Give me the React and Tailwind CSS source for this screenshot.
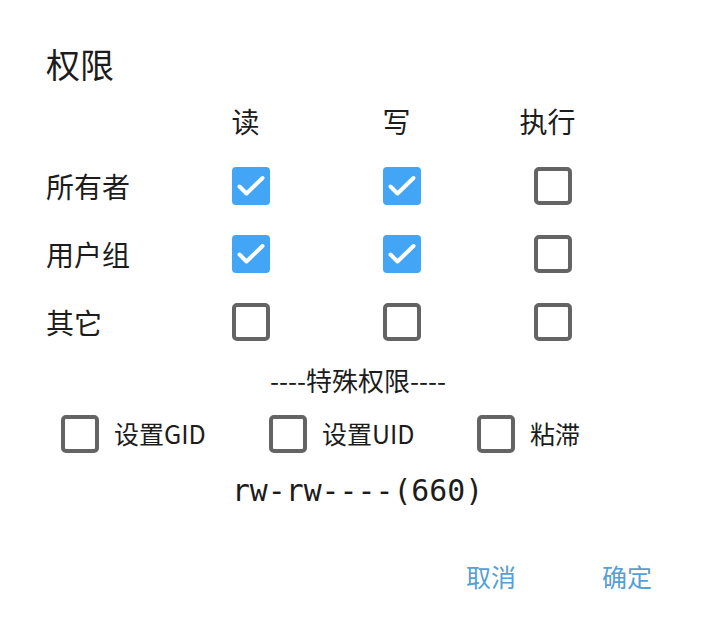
const cjk = { fontFamily: '"Noto Sans CJK SC", "Noto Sans", sans-serif' };

const rows = [
  { label: '所有者', values: [true, true, false] },
  { label: '用户组', values: [true, true, false] },
  { label: '其它', values: [false, false, false] },
];

function Box({ checked }) {
  if (checked) {
    return (
      <span className="w-[38px] h-[38px] rounded-[4px] bg-[#42a5f5] flex items-center justify-center">
        <svg width="38" height="38" viewBox="0 0 38 38" fill="none" stroke="white" strokeWidth="4" strokeLinecap="round" strokeLinejoin="round">
          <path d="M7.5 19.5l7 7L30.5 11" />
        </svg>
      </span>
    );
  }
  return <span className="w-[38px] h-[38px] rounded-[5px] border-[4px] border-[#646464] bg-white" />;
}

export default function App() {
  return (
    <div className="w-[720px] h-[636px] bg-white text-[#1c1c1c] flex flex-col" style={cjk}>
      <div className="mt-[44px] pl-[46px] h-[40px] leading-[40px] text-[34px]">权限</div>

      <div className="mt-[17px] pl-[46px] h-[40px] grid grid-cols-[129px_151px_151px_151px] items-center text-[28px] leading-[40px]">
        <span />
        <span className="text-center pr-[10px]">读</span>
        <span className="text-center pr-[10px]">写</span>
        <span className="text-center pr-[10px]">执行</span>
      </div>

      <div className="mt-[11px] pl-[46px] flex flex-col">
        {rows.map((r) => (
          <div key={r.label} className="h-[68px] grid grid-cols-[129px_151px_151px_151px] items-center text-[28px]">
            <span>{r.label}</span>
            {r.values.map((v, i) => (
              <span key={i} className="flex justify-center">
                <Box checked={v} />
              </span>
            ))}
          </div>
        ))}
      </div>

      <div className="mt-[6px] h-[36px] leading-[36px] text-center pr-[4px] text-[26px]">----特殊权限----</div>

      <div className="mt-[16px] pl-[61px] h-[40px] grid grid-cols-[208px_208px_208px] items-center text-[25px]">
        {['设置GID', '设置UID', '粘滞'].map((t) => (
          <div key={t} className="flex items-center gap-[15px]">
            <Box checked={false} />
            <span>{t}</span>
          </div>
        ))}
      </div>

      <div
        className="mt-[17px] h-[40px] leading-[40px] text-center pr-[5px] text-[29.8px]"
        style={{ fontFamily: '"DejaVu Sans Mono", "Liberation Mono", monospace' }}
      >
        rw-rw----(660)
      </div>

      <div className="mt-[46px] h-[40px] flex justify-end items-center gap-[86px] pr-[68px] text-[25px] text-[#55a0d4]">
        <button type="button">取消</button>
        <button type="button">确定</button>
      </div>
    </div>
  );
}
